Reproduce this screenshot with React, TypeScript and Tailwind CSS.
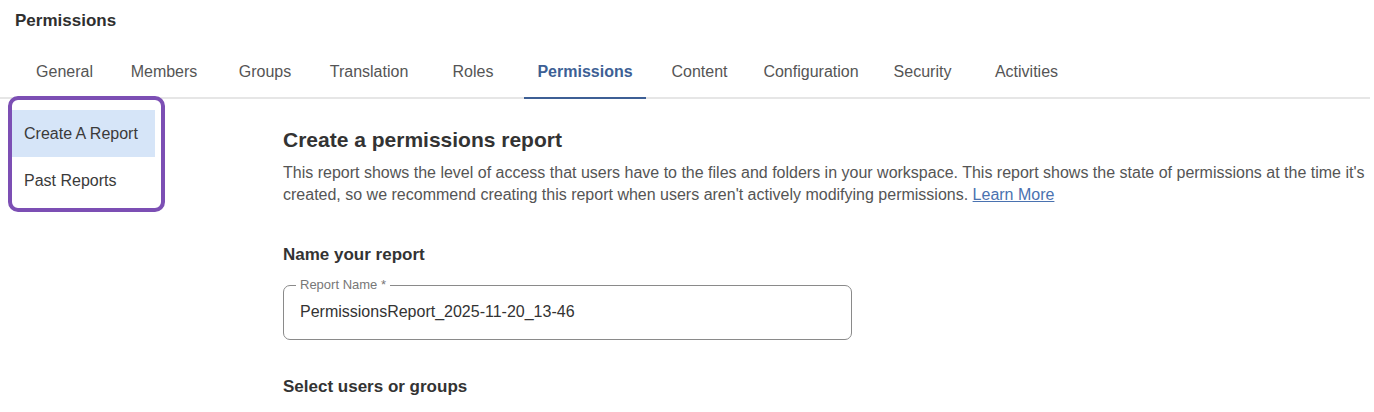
import React from 'react'

const tabs = [
  { name: "General", w: "w-[99px]" },
  { name: "Members", w: "w-[100px]" },
  { name: "Groups", w: "w-[102px]" },
  { name: "Translation", w: "w-[106px]" },
  { name: "Roles", w: "w-[102px]" },
  { name: "Permissions", w: "w-[122px]", active: true },
  { name: "Content", w: "w-[107px]" },
  { name: "Configuration", w: "w-[116px]" },
  { name: "Security", w: "w-[107px]" },
  { name: "Activities", w: "w-[101px]" },
]

const App = () => {
  return (
    <div className="w-[1374px] h-[412px] bg-white overflow-hidden font-['Liberation_Sans',Arial,sans-serif] text-[#333]">
      <h1 className="pl-[15px] pt-[11px] text-[17px] leading-[20px] font-bold text-[#2f2f2f]">Permissions</h1>

      <div className="mt-[31px] mr-[4px] border-b-2 border-[#e6e6e6] pl-[15px] flex">
        {tabs.map((tab) => (
          <div
            key={tab.name}
            className={`${tab.w} h-[37px] flex justify-center pt-[1px] text-[16px] leading-[18px] -mb-[2px] ${
              tab.active ? "font-bold text-[#3d5f95] border-b-2 border-[#3d5f95]" : "text-[#555]"
            }`}
          >
            {tab.name}
          </div>
        ))}
      </div>

      <div className="flex">
        <div className="ml-[8px] -mt-[3px] w-[157px] h-[116px] border-4 border-[#7c4fb4] rounded-[10px] pt-[10px] pr-[6px]">
          <div className="h-[47px] bg-[#d6e5f8] flex items-center pl-[12px] text-[16px] text-[#3a3a3a]">Create A Report</div>
          <div className="h-[47px] flex items-center pl-[12px] text-[16px] text-[#3a3a3a]">Past Reports</div>
        </div>

        <div className="ml-[118px] pt-[28px] flex-1 pr-[4px]">
          <h2 className="text-[21px] leading-[26px] font-bold text-[#333]">Create a permissions report</h2>
          <p className="mt-[9px] text-[16px] leading-[22px] text-[#555]">
            This report shows the level of access that users have to the files and folders in your workspace. This report shows the state of permissions at the time it's created, so we recommend creating this report when users aren't actively modifying permissions.{" "}
            <a href="#" className="text-[#4a72b0] underline">Learn More</a>
          </p>

          <h3 className="mt-[39px] text-[17px] leading-[20px] font-bold text-[#333]">Name your report</h3>

          <div className="relative mt-[20px] w-[569px] h-[55px] border border-[#8a8a8a] rounded-[7px]">
            <span className="absolute -top-[8px] left-[12px] px-[4px] bg-white text-[13px] leading-[14px] text-[#777]">Report Name *</span>
            <div className="pl-[16px] pt-[17px] text-[16px] leading-[18px] text-[#333]">PermissionsReport_2025-11-20_13-46</div>
          </div>

          <h3 className="mt-[37px] text-[17px] leading-[20px] font-bold text-[#333]">Select users or groups</h3>
        </div>
      </div>
    </div>
  )
}

export default App
